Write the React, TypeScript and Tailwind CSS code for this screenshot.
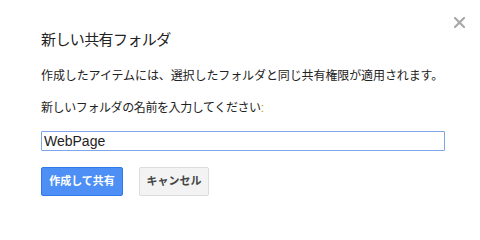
import { useState } from "react";

const jp = '"Liberation Sans", "Noto Sans CJK JP", sans-serif';

export default function App() {
  const [name, setName] = useState("WebPage");

  return (
    <div
      className="relative h-[226px] w-[480px] bg-white text-[#222]"
      style={{ fontFamily: jp }}
    >
      {/* Close */}
      <button className="absolute right-[14px] top-[15px] flex h-[14px] w-[14px] items-center justify-center">
        <svg width="11" height="11" viewBox="0 0 11 11">
          <path
            d="M1 1 L10 10 M10 1 L1 10"
            stroke="#a8a8a8"
            strokeWidth="2.2"
            strokeLinecap="square"
          />
        </svg>
      </button>

      <div className="flex flex-col pl-[41px] pt-[30px]">
        <h2 className="text-[15px] leading-[20px] tracking-[-0.6px] text-[#222]">
          新しい共有フォルダ
        </h2>

        <p className="mt-[18px] whitespace-nowrap text-[12px] leading-[16px] tracking-[-0.1px] text-[#222]">
          作成したアイテムには、選択したフォルダと同じ共有権限が適用されます。
        </p>

        <p className="mt-[16px] whitespace-nowrap text-[12px] leading-[16px] tracking-[-0.4px] text-[#222]">
          新しいフォルダの名前を入力してください<span className="text-[#dd8a00]">:</span>
        </p>

        <input
          value={name}
          onChange={(e) => setName(e.target.value)}
          className="mt-[15px] box-border h-[20px] w-[404px] rounded-[1px] border border-[#7ea7ea] px-[2px] text-[14px] leading-[18px] text-[#222] outline-none"
          style={{ fontFamily: '"Liberation Sans", Arial, sans-serif' }}
        />

        <div className="mt-[16px] flex gap-[16px]">
          <button className="h-[29px] w-[82px] rounded-[2px] border border-[#3079ed] bg-[#4d8ff5] text-[11px] font-bold text-white">
            作成して共有
          </button>
          <button className="h-[29px] w-[70px] rounded-[2px] border border-[#dcdcdc] bg-[#f3f3f3] text-[11px] font-bold text-[#444]">
            キャンセル
          </button>
        </div>
      </div>
    </div>
  );
}
